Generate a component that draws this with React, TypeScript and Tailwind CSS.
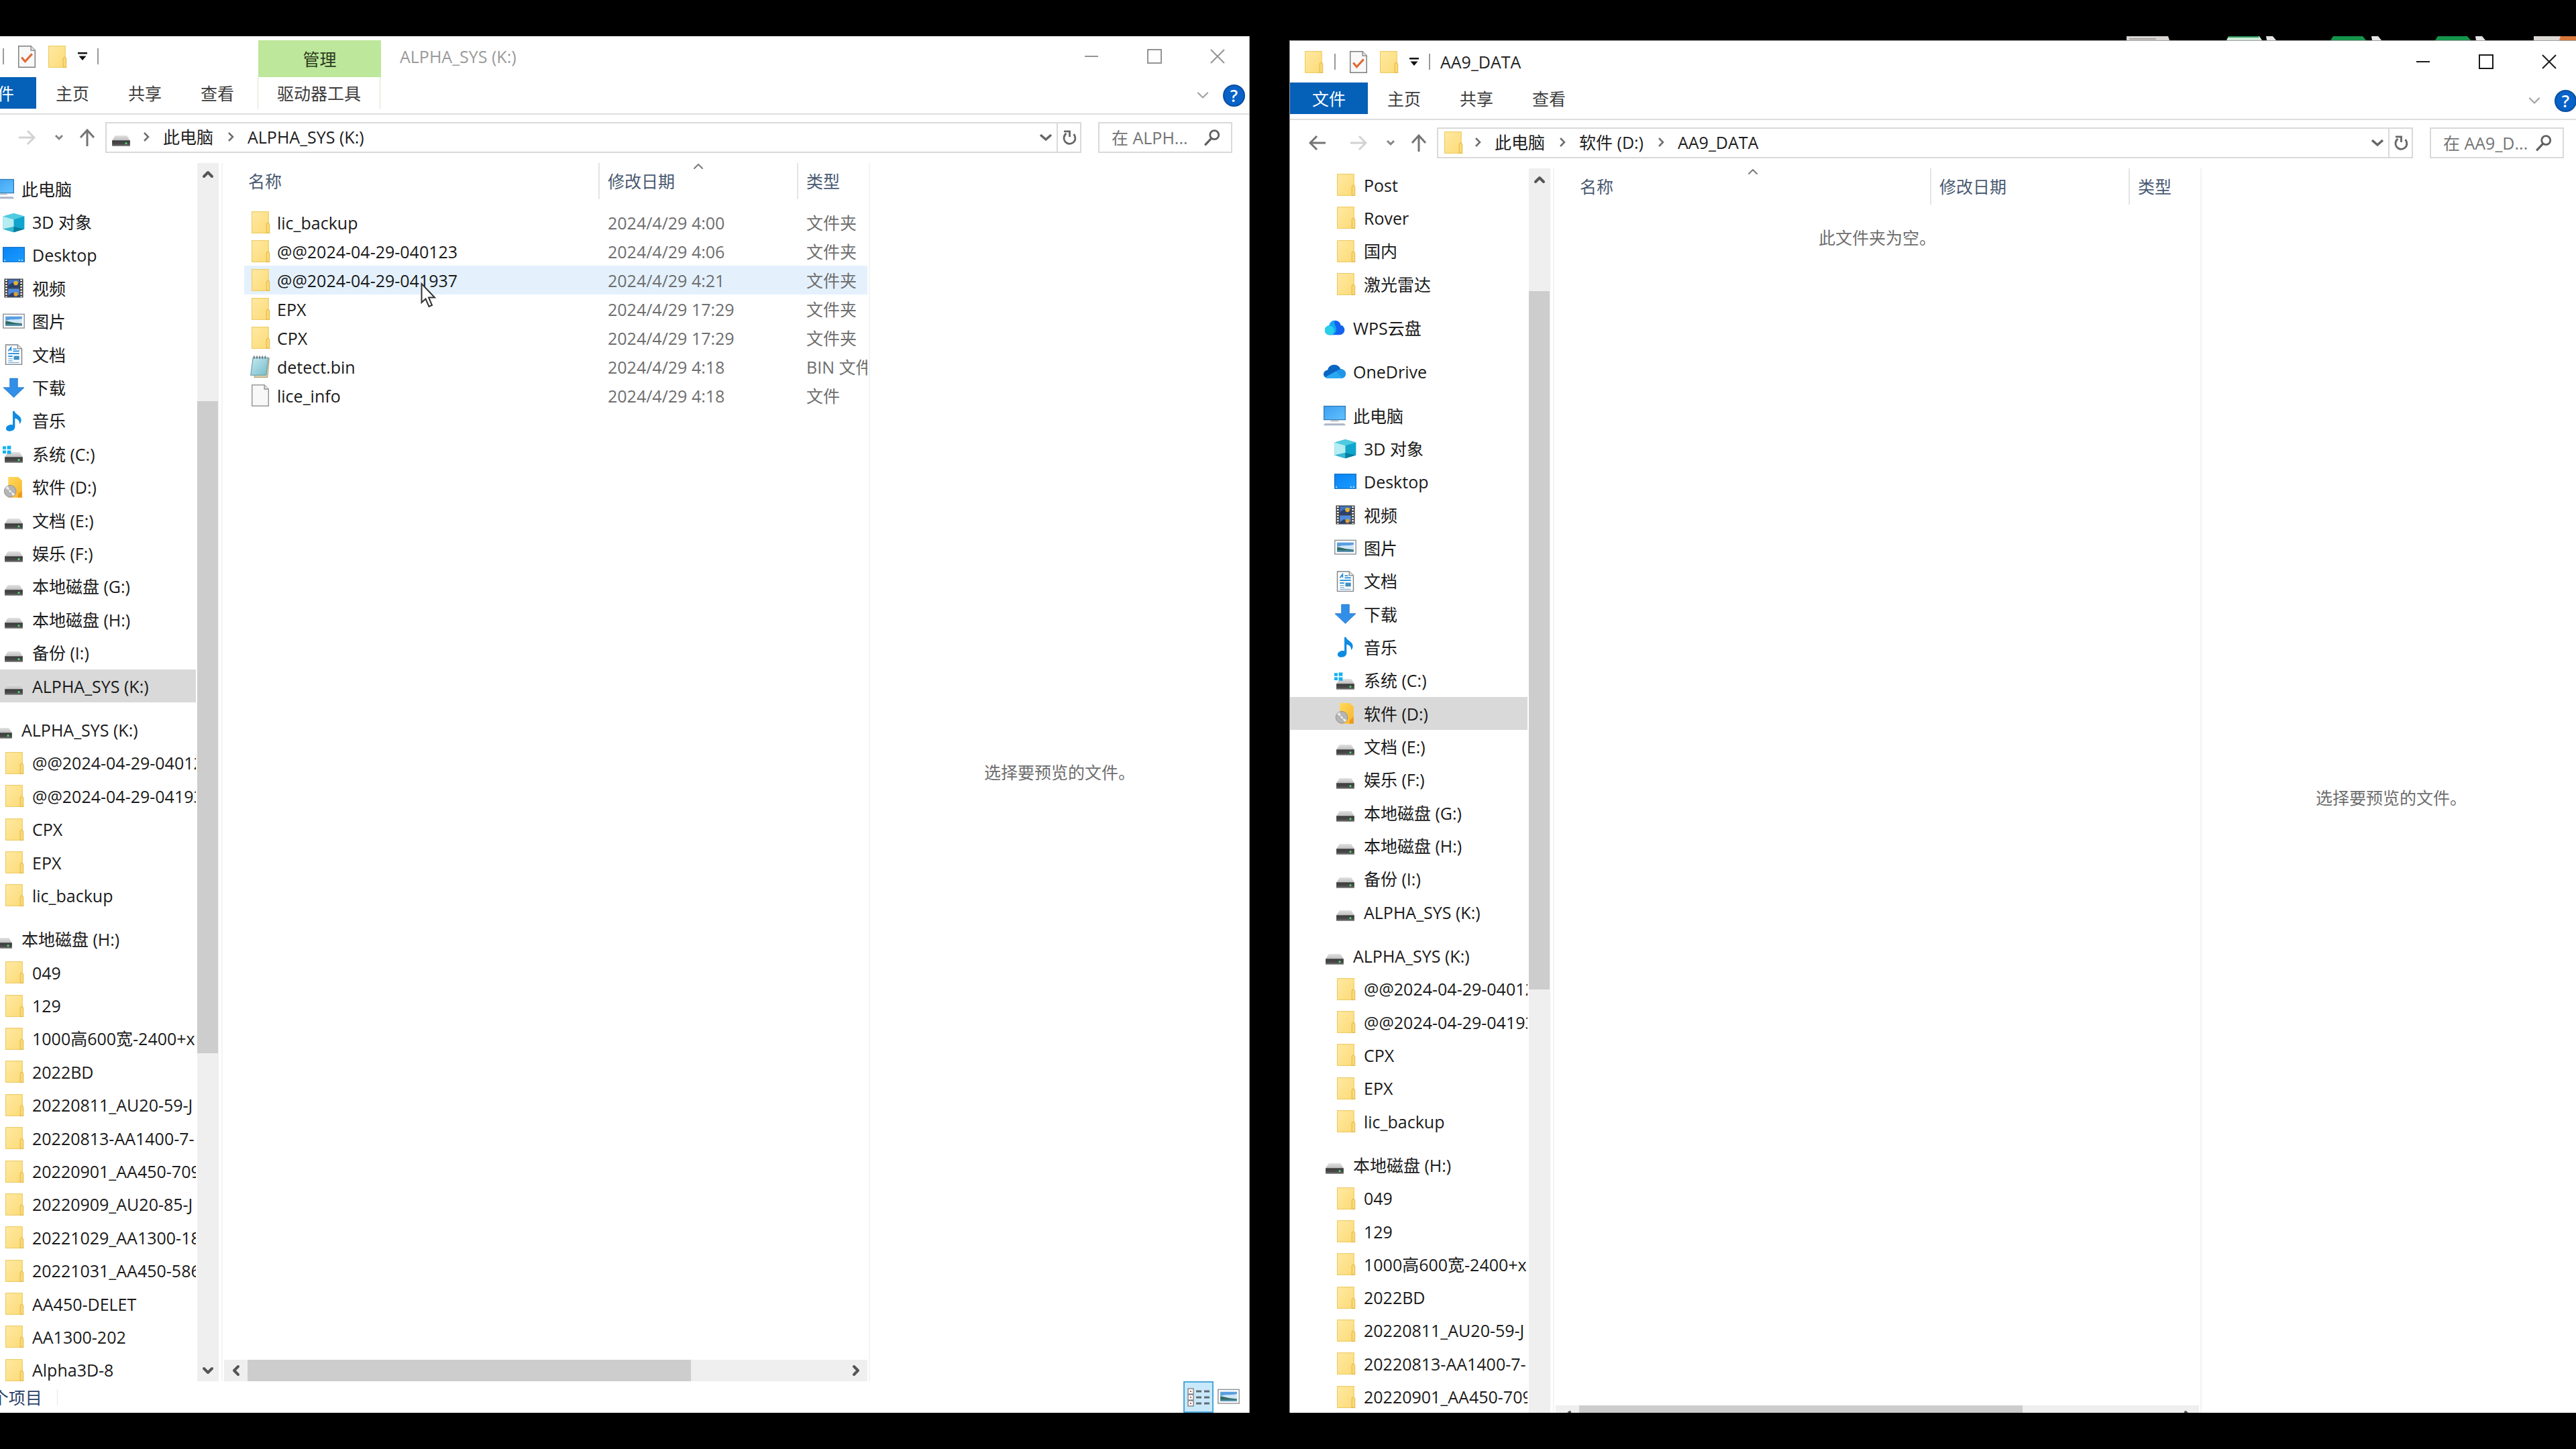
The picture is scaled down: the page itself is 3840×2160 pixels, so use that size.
import type { ReactNode } from "react";
import { ChevronDown, ChevronLeft, ChevronRight, ChevronUp } from "lucide-react";

type IconName =
  | "folder" | "drive" | "system" | "software" | "pc" | "cube" | "desktop" | "video"
  | "picture" | "document" | "download" | "music" | "wps" | "onedrive" | "notepad" | "file" | "check";

interface TreeItem {
  label: string;
  icon: IconName;
  root?: boolean;
  selected?: boolean;
}

interface FileRow {
  name: string;
  date: string;
  type: string;
  icon: IconName;
  hovered?: boolean;
}

const drawings: Record<IconName, ReactNode> = {
  folder: (
    <>
      <rect x="2.2" y="0.3" width="12" height="15.4" fill="url(#folderFill)" stroke="#ecc95f" strokeWidth="0.5" />
      <path d="M12.7 15.7V9.2l1-1 1.2 1v6.5z" fill="#fbd974" stroke="#e3b94c" strokeWidth="0.5" />
    </>
  ),
  drive: (
    <>
      <path d="M3.8 6.8h8.4l2.3 3.6h-13z" fill="url(#lidFill)" />
      <rect x="1.5" y="10.3" width="13" height="4.2" fill="url(#driveFill)" />
      <rect x="11" y="11.8" width="1.3" height="1.3" fill="#4fe36a" />
    </>
  ),
  system: (
    <>
      <path d="M3.8 6.8h8.4l2.3 3.6h-13z" fill="url(#lidFill)" />
      <rect x="1.5" y="10.3" width="13" height="4.2" fill="url(#driveFill)" />
      <rect x="11" y="11.8" width="1.3" height="1.3" fill="#4fe36a" />
      <path d="M0 2.6h2.4v2.1H0zM3.2 2.2H6v2.5H3.200zM0 5.6h2.400v2.100H0zM3.200 5.600H6v2.500H3.200z" fill="#14b1f0" />
    </>
  ),
  software: (
    <>
      <path d="M4 0.5h7.2L14 3v12.4H4z" fill="url(#softFill)" />
      <path d="M11 15.4c-.4-2 .8-4 3-4.6v4.6z" fill="#f09a1c" />
      <circle cx="5.4" cy="10.8" r="4.3" fill="#b5b5b5" stroke="#8a8a8a" strokeWidth="0.4" />
      <path d="M5.4 10.8L2 8.5l1.7-1.5zM5.4 10.8L9 12.8l-1.5 1.5z" fill="#ededed" />
      <circle cx="5.4" cy="10.8" r="1.1" fill="#f5f5f5" stroke="#8a8a8a" strokeWidth="0.3" />
    </>
  ),
  pc: (
    <>
      <rect x="0.3" y="1.2" width="15.4" height="9.8" fill="url(#screenFill)" stroke="#2b78b5" strokeWidth="0.6" />
      <path d="M6 11.3h4l1.5 1h-7z" fill="#aeb9c4" />
      <path d="M1 13.7h14l1 1.5H0z" fill="#a9b6c6" />
    </>
  ),
  cube: (
    <>
      <path d="M8 1.5L15.7 3.6v9.2L8 15.2.3 12.800V3.600z" fill="#10a5cc" />
      <path d="M8 1.500l7.700 2.100L8 5.900.3 3.600z" fill="#4fcbe0" />
      <path d="M.3 3.600L8 5.900v5.300L.3 12.800z" fill="#b5edf2" />
      <path d="M.3 12.800L8 11.200v4z" fill="#38b7cf" />
      <path d="M8 11.200l7.700 1.600L8 15.200z" fill="#077d9f" />
    </>
  ),
  desktop: (
    <>
      <rect x="0.3" y="2.3" width="15.4" height="10.4" fill="url(#deskFill)" stroke="#0b6fc4" strokeWidth="0.6" />
      <path d="M1 11.700h1M11.500 11.700h1M13.500 11.700h1" stroke="#c9e6ff" strokeWidth="0.8" />
    </>
  ),
  video: (
    <>
      <rect x="1.2" y="1.2" width="13.6" height="13.6" fill="#3c3c3c" />
      <rect x="4" y="1.8" width="8" height="5.8" fill="#3f74c9" />
      <rect x="4" y="8.4" width="8" height="5.8" fill="#4f8be0" />
      <path d="M4 6l3-2 2 1.5L12 4v3.6H4zM4 13.2l3-2 5 2v1H4z" fill="#2c3f6d" />
      <circle cx="9.5" cy="4.4" r="1.6" fill="#e2b42d" />
      <circle cx="9.5" cy="12.4" r="1.5" fill="#e2a02d" />
      <path d="M2.6 1.800v12.600M13.4 1.800v12.600" stroke="#fff" strokeWidth="1.3" strokeDasharray="1.1 0.9" />
    </>
  ),
  picture: (
    <>
      <rect x="0.4" y="2.6" width="15.2" height="10" fill="#fff" stroke="#8f9296" strokeWidth="0.7" />
      <rect x="2" y="4.2" width="12" height="6.8" fill="#cfe6f8" />
      <path d="M2 4.2h12v1.600c-4 1-8 0-12 1.500z" fill="#5a9ee0" />
      <path d="M2 7.500c3 0 4 1.400 12 1.800V11H2z" fill="#2f6b66" />
      <path d="M2 10h12v1H2z" fill="#5b97b8" />
    </>
  ),
  document: (
    <>
      <path d="M2.2 1h8.600l3 2.800v11.400H2.200z" fill="#fff" stroke="#7f8489" strokeWidth="0.7" />
      <path d="M10.800 1v2.800h3" fill="#e6e6e6" stroke="#7f8489" strokeWidth="0.6" />
      <path d="M4 5.500l2-2.500v2.500M7.500 4H10M7.500 5.500H12M4 7.300h8M4 9.300h3.200" stroke="#1d86d8" strokeWidth="0.8" fill="none" />
      <rect x="8" y="9" width="4" height="2.8" fill="#3c8fc4" />
      <path d="M4 11h3.200M4 12.500h3.200M4 13.800h8" stroke="#8ab9dc" strokeWidth="0.7" />
    </>
  ),
  download: <path d="M5.200 1h5.600v6.600h4.700L8 14.800.5 7.600h4.700z" fill="#318fe8" stroke="#2474c4" strokeWidth="0.4" />,
  music: (
    <path
      d="M7.3 0.8h1.2c.4 2.500 4.900 3 4.900 6.600 0 1.500-.7 2.400-1.300 2.800.4-2.400-1.500-3.700-3.200-4.100v6.300c0 1.800-1.700 3-3.700 3-1.700 0-2.800-.8-2.800-2 0-1.500 1.800-2.700 3.800-2.700.5 0 .8 0 1.100.2z"
      fill="#0f8be2"
    />
  ),
  wps: (
    <>
      <path d="M8.200 2.800c2.400 0 3.900 1.500 4.200 3.400 1.700.3 2.800 1.700 2.800 3.400 0 2.200-1.700 3.600-3.800 3.600H4.700C2.500 13.200 1 11.800 1 9.900c0-1.900 1.300-3.200 3.100-3.300.4-2.200 1.900-3.800 4.100-3.800z" fill="#1463f0" />
      <path d="M8.200 2.800c-1 2.300.600 3.600 1 5.700.4 2.300-1 4.200-3 4.700H4.700C2.500 13.200 1 11.800 1 9.900c0-1.900 1.300-3.200 3.100-3.300.4-2.200 1.900-3.800 4.100-3.800z" fill="#14a6f5" />
      <path d="M4.100 6.600c2.600 0 3.900 1.800 3.500 3.900-.3 1.600-1.500 2.700-2.900 2.700C2.500 13.200 1 11.800 1 9.900c0-1.900 1.300-3.200 3.100-3.300z" fill="#28d0e8" />
    </>
  ),
  onedrive: (
    <>
      <path d="M3 6.5C3.5 4 5.5 2.8 7.7 2.8c2.3 0 3.900 1.300 4.600 3 2.200.2 3.700 1.600 3.700 3.500 0 2-1.700 3.300-3.700 3.300H3.500C1.400 12.600 0 11.200 0 9.600c0-1.700 1.400-2.900 3-3.100z" fill="#0a66c2" />
      <path d="M1.300 11.700L11.500 6c2.700-.4 4.500 1.300 4.500 3.300 0 2-1.700 3.300-3.700 3.300H3.500c-.9 0-1.600-.4-2.200-.9z" fill="#1d96e8" />
      <path d="M9 7.500l4.500 4.900c-.4.200-.8.200-1.200.2H3.500c-.9 0-1.600-.4-2.200-.9z" fill="#2aa8f0" />
    </>
  ),
  notepad: (
    <>
      <path d="M3.5 2h11.2l-1.2 13.7H4z" fill="#e6d9ae" stroke="#a89b78" strokeWidth="0.5" />
      <path d="M3 1.5h11l-1.5 12.7H1.3z" fill="url(#padFill)" stroke="#5c98a5" strokeWidth="0.5" />
      <path d="M3.8 0.3v2M5.8 0.3v2M7.8 0.3v2M9.8 0.3v2M11.8 0.3v2" stroke="#59676c" strokeWidth="0.7" />
    </>
  ),
  file: (
    <>
      <path d="M2.3 0.4h8.9l3 3v12.2H2.3z" fill="#f8f8f8" stroke="#858585" strokeWidth="0.6" />
      <path d="M11.2 0.4v3h3" fill="#e4e4e4" stroke="#858585" strokeWidth="0.6" />
    </>
  ),
  check: (
    <>
      <path d="M2.3 0.4h8.9l3 3v12.2H2.3z" fill="#f8f8f8" stroke="#7d7d7d" strokeWidth="0.7" />
      <path d="M11.2 0.4v3h3" fill="#e4e4e4" stroke="#7d7d7d" strokeWidth="0.6" />
      <path d="M4.5 8.5l2.5 3 5-5.5" fill="none" stroke="#e06a34" strokeWidth="1.5" />
    </>
  ),
};

function Icon({ name }: { name: IconName }) {
  return (
    <svg viewBox="0 0 16 16" className="w-[33px] h-[33px] shrink-0" aria-hidden="true">
      {drawings[name]}
    </svg>
  );
}

function IconDefs() {
  return (
    <svg width="0" height="0" className="absolute" aria-hidden="true">
      <defs>
        <linearGradient id="folderFill" x1="0" y1="0" x2="1" y2="1">
          <stop offset="0" stopColor="#ffe9a2" />
          <stop offset="1" stopColor="#fcdb78" />
        </linearGradient>
        <linearGradient id="lidFill" x1="0" y1="0" x2="0" y2="1">
          <stop offset="0" stopColor="#e2e2e2" />
          <stop offset="1" stopColor="#bdbdbd" />
        </linearGradient>
        <linearGradient id="driveFill" x1="0" y1="0" x2="0" y2="1">
          <stop offset="0" stopColor="#3a3a3a" />
          <stop offset="0.7" stopColor="#4d4d4d" />
          <stop offset="1" stopColor="#8c8c8c" />
        </linearGradient>
        <linearGradient id="softFill" x1="0" y1="0" x2="1" y2="1">
          <stop offset="0" stopColor="#ffd95c" />
          <stop offset="1" stopColor="#f9b52c" />
        </linearGradient>
        <linearGradient id="screenFill" x1="0" y1="0" x2="1" y2="1">
          <stop offset="0" stopColor="#3d9ff0" />
          <stop offset="1" stopColor="#62c2ff" />
        </linearGradient>
        <linearGradient id="deskFill" x1="0" y1="0" x2="1" y2="1">
          <stop offset="0" stopColor="#0a84f5" />
          <stop offset="1" stopColor="#1a9bff" />
        </linearGradient>
        <linearGradient id="padFill" x1="0" y1="0" x2="1" y2="1">
          <stop offset="0" stopColor="#c8e9f0" />
          <stop offset="1" stopColor="#74bccb" />
        </linearGradient>
      </defs>
    </svg>
  );
}

const folder = (label: string): TreeItem => ({ label, icon: "folder" });

const computer = (current: string): TreeItem[] => {
  const items: TreeItem[] = [
    { label: "此电脑", icon: "pc", root: true },
    { label: "3D 对象", icon: "cube" },
    { label: "Desktop", icon: "desktop" },
    { label: "视频", icon: "video" },
    { label: "图片", icon: "picture" },
    { label: "文档", icon: "document" },
    { label: "下载", icon: "download" },
    { label: "音乐", icon: "music" },
    { label: "系统 (C:)", icon: "system" },
    { label: "软件 (D:)", icon: "software" },
    { label: "文档 (E:)", icon: "drive" },
    { label: "娱乐 (F:)", icon: "drive" },
    { label: "本地磁盘 (G:)", icon: "drive" },
    { label: "本地磁盘 (H:)", icon: "drive" },
    { label: "备份 (I:)", icon: "drive" },
    { label: "ALPHA_SYS (K:)", icon: "drive" },
  ];
  return items.map((item) => ({ ...item, selected: item.label === current }));
};

const alphaSys: TreeItem[] = [
  { label: "ALPHA_SYS (K:)", icon: "drive", root: true },
  folder("@@2024-04-29-040123"),
  folder("@@2024-04-29-041937"),
  folder("CPX"),
  folder("EPX"),
  folder("lic_backup"),
];

const localDisk: TreeItem[] = [
  { label: "本地磁盘 (H:)", icon: "drive", root: true },
  folder("049"),
  folder("129"),
  folder("1000高600宽-2400+x"),
  folder("2022BD"),
  folder("20220811_AU20-59-J"),
  folder("20220813-AA1400-7-"),
  folder("20220901_AA450-709"),
  folder("20220909_AU20-85-J"),
  folder("20221029_AA1300-18"),
  folder("20221031_AA450-586"),
  folder("AA450-DELET"),
  folder("AA1300-202"),
  folder("Alpha3D-8"),
];

const leftTree = [computer("ALPHA_SYS (K:)"), alphaSys, localDisk];

const rightTree: TreeItem[][] = [
  [folder("Post"), folder("Rover"), folder("国内"), folder("激光雷达")],
  [{ label: "WPS云盘", icon: "wps", root: true }],
  [{ label: "OneDrive", icon: "onedrive", root: true }],
  computer("软件 (D:)"),
  alphaSys,
  localDisk.slice(0, 8),
];

const files: FileRow[] = [
  { name: "lic_backup", date: "2024/4/29 4:00", type: "文件夹", icon: "folder" },
  { name: "@@2024-04-29-040123", date: "2024/4/29 4:06", type: "文件夹", icon: "folder" },
  { name: "@@2024-04-29-041937", date: "2024/4/29 4:21", type: "文件夹", icon: "folder", hovered: true },
  { name: "EPX", date: "2024/4/29 17:29", type: "文件夹", icon: "folder" },
  { name: "CPX", date: "2024/4/29 17:29", type: "文件夹", icon: "folder" },
  { name: "detect.bin", date: "2024/4/29 4:18", type: "BIN 文件", icon: "notepad" },
  { name: "lice_info", date: "2024/4/29 4:18", type: "文件", icon: "file" },
];

function Separator() {
  return <span className="w-[2px] h-6 bg-[#9a9a9a]" />;
}

function TitleBar({ title, active, manage }: { title: string; active: boolean; manage?: boolean }) {
  return (
    <header className="h-[62px] flex items-center">
      <div className={manage ? "w-[447px] flex items-center pl-[18px]" : "flex items-center pl-[18px]"}>
        <Icon name="folder" />
        <span className="w-[31px] flex justify-center"><Separator /></span>
        <button aria-label="属性" className="w-[36px] flex justify-end"><Icon name="check" /></button>
        <button aria-label="新建文件夹" className="w-[45px] flex justify-end"><Icon name="folder" /></button>
        <button aria-label="自定义快速访问工具栏" className="w-[44px] flex justify-center">
          <svg viewBox="0 0 14 12" className="w-[14px] h-[12px]">
            <path d="M0 0h14v2.5H0zM1.5 5.5h11L7 12z" fill="#111" />
          </svg>
        </button>
        <Separator />
      </div>
      {manage && (
        <div className="w-[183px] self-end h-[55px] bg-[#bde79a] flex items-center justify-center text-[#2c3a20]">
          管理
        </div>
      )}
      <h1 className={manage ? "pl-[28px] text-[#9a9a9a]" : "pl-[15px] text-[#222]"}>{title}</h1>
      <div className={active ? "ml-auto self-stretch flex text-[#1a1a1a]" : "ml-auto self-stretch flex text-[#949494]"}>
        <button aria-label="最小化" className="w-[95px] flex items-center justify-center">
          <svg viewBox="0 0 22 22" className="w-[22px] h-[22px]"><path d="M1 11h20" stroke="currentColor" strokeWidth="2" /></svg>
        </button>
        <button aria-label="最大化" className="w-[93px] flex items-center justify-center">
          <svg viewBox="0 0 22 22" className="w-[22px] h-[22px]"><path d="M1 1h20v20H1z" fill="none" stroke="currentColor" strokeWidth="2" /></svg>
        </button>
        <button aria-label="关闭" className="w-[95px] flex items-center justify-center">
          <svg viewBox="0 0 22 22" className="w-[22px] h-[22px]"><path d="M1 1l20 20M21 1L1 21" stroke="currentColor" strokeWidth="2" /></svg>
        </button>
      </div>
    </header>
  );
}

function Ribbon({ manage }: { manage?: boolean }) {
  return (
    <div className="h-[56px] flex items-start border-b-2 border-[#dedede] text-[#3c3c3c]">
      <button className="w-[116px] h-[47px] bg-[#0560b8] text-white">文件</button>
      {["主页", "共享", "查看"].map((tab) => (
        <button key={tab} className="w-[108px] h-[47px]">{tab}</button>
      ))}
      {manage && (
        <button className="ml-[6px] w-[183px] h-[47px] border-x border-[#d8e6cc]">驱动器工具</button>
      )}
      <div className="ml-auto h-[54px] flex items-center gap-4 pr-[6px]">
        <button aria-label="展开功能区"><ChevronDown className="w-[28px] h-[28px] text-[#a5a5a5]" strokeWidth={2} /></button>
        <button aria-label="帮助" className="w-[33px] h-[33px] rounded-full bg-[#0862c8] border-2 border-[#0a4f9e] text-white text-[25px] leading-none font-semibold">
          ?
        </button>
      </div>
    </div>
  );
}

function AddressBar({ path, icon, search, canGoBack }: { path: string[]; icon: IconName; search: string; canGoBack: boolean }) {
  return (
    <div className="h-[72px] flex items-center pb-[5px]">
      <div className="w-[219px] flex items-center pl-[28px]">
        <button aria-label="后退" className={canGoBack ? "w-[26px] text-[#747474]" : "w-[26px] text-[#d2d2d2]"}>
          <svg viewBox="0 0 26 26" className="w-[26px] h-[26px]"><path d="M25 13H3M12 3L2 13l10 10" fill="none" stroke="currentColor" strokeWidth="3" /></svg>
        </button>
        <button aria-label="前进" className="ml-[35px] text-[#d2d2d2]">
          <svg viewBox="0 0 26 26" className="w-[26px] h-[26px]"><path d="M1 13h22M14 3l10 10-10 10" fill="none" stroke="currentColor" strokeWidth="3" /></svg>
        </button>
        <button aria-label="最近浏览的位置" className="ml-[28px] text-[#858585]">
          <svg viewBox="0 0 14 14" className="w-[14px] h-[14px]"><path d="M2 4l5 5 5-5" fill="none" stroke="currentColor" strokeWidth="3" /></svg>
        </button>
        <button aria-label="向上" className="ml-[22px] text-[#747474]">
          <svg viewBox="0 0 26 26" className="w-[26px] h-[26px]"><path d="M13 26V3M3 13L13 2l10 11" fill="none" stroke="currentColor" strokeWidth="3" /></svg>
        </button>
      </div>
      <div className="flex-1 h-[46px] flex items-center border-2 border-[#d9d9d9] pl-[5px]">
        <Icon name={icon} />
        {path.map((part) => (
          <span key={part} className="flex items-center pb-[2px]">
            <span className="w-[46px] flex justify-center pr-[4px]">
              <svg viewBox="0 0 10 14" className="w-[10px] h-[14px]"><path d="M2 1l6 6-6 6" fill="none" stroke="#6e6e6e" strokeWidth="2.5" /></svg>
            </span>
            <a href="#" className="pr-[5px] text-[#1c1c1c]">{part}</a>
          </span>
        ))}
        <button aria-label="上一个位置" className="ml-auto w-[32px] flex justify-center">
          <svg viewBox="0 0 20 14" className="w-[20px] h-[14px]"><path d="M2 3l8 7 8-7" fill="none" stroke="#666" strokeWidth="3.5" /></svg>
        </button>
        <button aria-label="刷新" className="w-[35px] h-full border-l-2 border-[#d9d9d9] flex items-center justify-center">
          <svg viewBox="0 0 24 24" className="w-[24px] h-[24px]">
            <path d="M18.5 7A8.500 8.500 0 1 1 7.500 6" fill="none" stroke="#666" strokeWidth="2.8" />
            <path d="M4 2.800h8.500V11" fill="none" stroke="#666" strokeWidth="2.8" />
          </svg>
        </button>
      </div>
      <label className="ml-[25px] mr-[25px] w-[200px] h-[46px] flex items-center border-2 border-[#d9d9d9] pl-[18px] pr-[15px]">
        <input
          type="text"
          aria-label="搜索"
          placeholder={search}
          className="min-w-0 flex-1 bg-transparent outline-none placeholder:text-[#747474]"
        />
        <svg viewBox="0 0 24 24" className="w-[26px] h-[26px] shrink-0">
          <circle cx="15" cy="8.5" r="6" fill="none" stroke="#5f5f5f" strokeWidth="2.6" />
          <path d="M11 13L2 22.5" stroke="#5f5f5f" strokeWidth="3" />
        </svg>
      </label>
    </div>
  );
}

function NavTree({ groups, thumb, listClass }: { groups: TreeItem[][]; thumb: string; listClass: string }) {
  return (
    <nav className="w-[392px] shrink-0 flex overflow-hidden">
      <div className={`w-[354px] flex flex-col ${listClass}`}>
        {groups.flatMap((group, index) =>
          group.map((item, i) => (
            <button
              key={`${index}-${item.label}`}
              className={[
                "flex-1 min-h-0 flex items-center gap-[11px] overflow-hidden whitespace-nowrap text-left text-[#1a1a1a]",
                item.root ? "pl-[50px]" : "pl-[66px]",
                item.selected ? "bg-[#d9d9d9]" : "",
                index > 0 && i === 0 ? "mt-4" : "",
              ].join(" ")}
            >
              <Icon name={item.icon} />
              {item.label}
            </button>
          ))
        )}
      </div>
      <div className="ml-[2px] w-[32px] bg-[#efefef] flex flex-col">
        <button aria-label="向上滚动" className="h-[33px] flex items-center justify-center">
          <ChevronUp className="w-[24px] h-[24px] text-[#555]" strokeWidth={4} />
        </button>
        <div className={`w-[31px] bg-[#cdcdcd] ${thumb}`} />
        <button aria-label="向下滚动" className="mt-auto h-[33px] flex items-center justify-center">
          <ChevronDown className="w-[24px] h-[24px] text-[#555]" strokeWidth={4} />
        </button>
      </div>
    </nav>
  );
}

function FileList({ rows, sortBy }: { rows: FileRow[]; sortBy: string }) {
  return (
    <main className="flex-1 min-w-0 flex flex-col border-x-2 border-[#f3f3f3] px-[2px]">
      <div className="flex-1 min-h-0 overflow-hidden pl-[30px]">
        <table className="w-full table-fixed border-collapse">
          <thead>
            <tr>
              {["名称", "修改日期", "类型"].map((column, i) => (
                <th
                  key={column}
                  scope="col"
                  className={[
                    "h-[67px] p-0 align-top text-left font-normal text-[#4a5a73]",
                    i === 1 ? "w-[296px]" : "",
                    i === 2 ? "w-[103px]" : "",
                  ].join(" ")}
                >
                  <div
                    className={[
                      "relative h-[54px] flex items-center",
                      i === 0 ? "pl-[6px]" : "pl-[12px]",
                      i < 2 ? "border-r-2 border-[#e4e4e4]" : "",
                    ].join(" ")}
                  >
                    {column}
                    {sortBy === column && (
                      <ChevronUp className="absolute left-1/2 -top-[7px] -ml-3 w-[24px] h-[24px] text-[#7a7a7a]" strokeWidth={2} />
                    )}
                  </div>
                </th>
              ))}
            </tr>
          </thead>
          <tbody>
            {rows.map((row) => (
              <tr key={row.name} className={row.hovered ? "bg-[#e4f1fd]" : ""}>
                <td className="h-[43px] p-0">
                  <div className="flex items-center gap-[9px] pl-[7px] text-[#1a1a1a]">
                    <Icon name={row.icon} />
                    {row.name}
                  </div>
                </td>
                <td className="h-[43px] p-0 pl-[12px] text-[#6e6e6e]">{row.date}</td>
                <td className="h-[43px] p-0 pl-[12px] text-[#6e6e6e] overflow-hidden whitespace-nowrap">{row.type}</td>
              </tr>
            ))}
          </tbody>
        </table>
        {rows.length === 0 && <p className="pt-[20px] pr-[30px] text-center text-[#6e6e6e]">此文件夹为空。</p>}
      </div>
      <div className="h-[32px] bg-[#efefef] flex">
        <button aria-label="向左滚动" className="w-[35px] flex items-center justify-center">
          <ChevronLeft className="w-[24px] h-[24px] text-[#555]" strokeWidth={4} />
        </button>
        <div className="w-[661px] bg-[#cdcdcd]" />
        <button aria-label="向右滚动" className="ml-auto w-[35px] flex items-center justify-center">
          <ChevronRight className="w-[24px] h-[24px] text-[#555]" strokeWidth={4} />
        </button>
      </div>
    </main>
  );
}

function StatusBar({ count }: { count: number }) {
  return (
    <footer className="h-[47px] shrink-0 flex items-center text-[#2b4168]">
      <span className="pl-[29px]">{count} 个项目</span>
      <span className="ml-[22px] w-px h-[24px] bg-[#e8e8e8]" />
      <button aria-label="详细信息" className="ml-auto w-[45px] h-full bg-[#c9e9fb] border-2 border-[#4aa8dc] flex items-center justify-center">
        <svg viewBox="0 0 34 28" className="w-[34px] h-[28px]">
          <path d="M1 1h8v8H1zM1 10h8v8H1zM1 19h8v8H1z" fill="#fff" stroke="#8b8b8b" strokeWidth="1.5" />
          <path d="M4 5h2M4 14h2M4 23h2" stroke="#c0504d" strokeWidth="2" />
          <path d="M13 5h8M25 5h8M13 14h8M25 14h8M13 23h8M25 23h8" stroke="#5f6b73" strokeWidth="3" />
        </svg>
      </button>
      <button aria-label="大图标" className="ml-[6px] mr-[14px]">
        <Icon name="picture" />
      </button>
    </footer>
  );
}

interface ExplorerProps {
  title: string;
  path: string[];
  icon: IconName;
  search: string;
  groups: TreeItem[][];
  rows: FileRow[];
  sortBy: string;
  active: boolean;
  manage?: boolean;
  thumb: string;
  listClass: string;
  className: string;
}

function Explorer(props: ExplorerProps) {
  return (
    <section className={`flex-1 min-w-0 flex flex-col bg-white border-x border-t border-[#9f9f9f] ${props.className}`}>
      <TitleBar title={props.title} active={props.active} manage={props.manage} />
      <Ribbon manage={props.manage} />
      <AddressBar path={props.path} icon={props.icon} search={props.search} canGoBack={props.active} />
      <div className="flex-1 min-h-0 flex">
        <NavTree groups={props.groups} thumb={props.thumb} listClass={props.listClass} />
        <FileList rows={props.rows} sortBy={props.sortBy} />
        <aside className="w-[565px] shrink-0 flex items-center justify-center text-[#6e6e6e]">选择要预览的文件。</aside>
      </div>
      <StatusBar count={props.rows.length} />
    </section>
  );
}

export default function App() {
  return (
    <div className="h-screen bg-black py-[54px] font-['Open_Sans','Noto_Sans_CJK_SC',sans-serif] text-[25px] leading-[32px]">
      <IconDefs />
      <div className="relative h-full flex gap-[59px] overflow-hidden">
        <Explorer
          title="ALPHA_SYS (K:)"
          path={["此电脑", "ALPHA_SYS (K:)"]}
          icon="drive"
          search="在 ALPH..."
          groups={leftTree}
          rows={files}
          sortBy="修改日期"
          active={false}
          manage
          thumb="mt-[322px] h-[972px]"
          listClass="pt-[14px] -mb-2"
          className="-ml-[63px] -mt-[2px]"
        />
        <Explorer
          title="AA9_DATA"
          path={["此电脑", "软件 (D:)", "AA9_DATA"]}
          icon="folder"
          search="在 AA9_D..."
          groups={rightTree}
          rows={[]}
          sortBy="名称"
          active
          thumb="mt-[150px] h-[1041px]"
          listClass="pb-[20px]"
          className="-mr-2 mt-[6px] -mb-[68px]"
        />

        {/* desktop icons peeking out above the right window */}
        <svg viewBox="0 0 670 6" className="absolute right-0 top-0 w-[670px] h-[6px]" aria-hidden="true">
          <path d="M0 0h62l2 6H0z" fill="#d9d6d4" />
          <path d="M4 3h40v2H4z" fill="#a7a3a0" />
          <path d="M152 0h46l4 6h-53z" fill="#cfe9d8" />
          <path d="M152 0h44l2 2h-47z" fill="#2d9a5c" />
          <path d="M208 0h10l5 6h-14zM365 0h10l5 6h-14zM520 0h10l5 6h-14z" fill="#e6e6e6" />
          <path d="M308 0h44l5 6h-53zM464 0h44l5 6h-53z" fill="#15964c" />
          <path d="M607 0h40v6h-40z" fill="#dcd8d5" />
          <path d="M647 0h23v6h-25z" fill="#d9793a" />
        </svg>

        <svg viewBox="0 0 24 38" className="absolute left-[627px] top-[367px] w-[24px] h-[38px]" aria-hidden="true">
          <path d="M1.5 2v28l6-5.5 5 11.5 4.5-2-5-11.5h9z" fill="#fff" stroke="#333" strokeWidth="2" />
        </svg>
      </div>
    </div>
  );
}
